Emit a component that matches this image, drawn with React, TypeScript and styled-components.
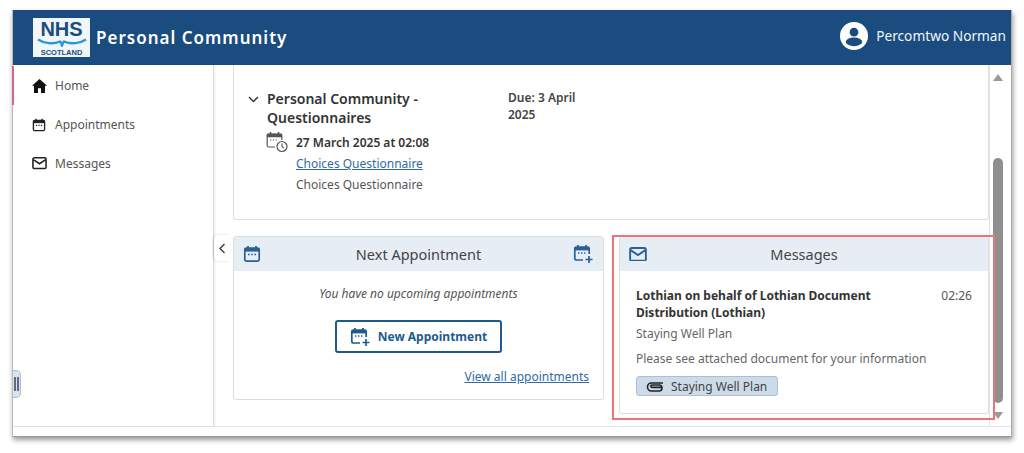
import React, { FC } from 'react';
import styled, { createGlobalStyle } from 'styled-components';

const GlobalStyle = createGlobalStyle`
  html, body { margin: 0; padding: 0; background: #fff; }
  body { font-family: "Noto Sans", "Open Sans", sans-serif; color: #333; }
`;

const CalendarIcon: FC<{ size?: number }> = ({ size = 18 }) => (
  <svg width={size} height={size} viewBox="0 0 18 18" fill="none">
    <path d="M5 1v3M13 1v3" stroke="currentColor" strokeWidth="1.8" />
    <rect x="1.8" y="3" width="14.4" height="13.2" rx="1.6" stroke="currentColor" strokeWidth="1.7" />
    <rect x="1.8" y="3" width="14.4" height="3.6" fill="currentColor" />
    <path d="M5 9.5h1.6M8.2 9.5h1.6M11.4 9.5h1.6" stroke="currentColor" strokeWidth="1.4" />
  </svg>
);

const CalendarPlusIcon: FC = () => (
  <svg width="21" height="20" viewBox="0 0 21 20" fill="none">
    <path d="M5 1v3M13 1v3" stroke="currentColor" strokeWidth="1.8" />
    <path d="M10 16H3.4a1.6 1.6 0 0 1-1.6-1.6V4.6A1.6 1.6 0 0 1 3.4 3h11.2a1.6 1.6 0 0 1 1.6 1.6V10" stroke="currentColor" strokeWidth="1.7" />
    <rect x="1.8" y="3" width="14.4" height="3.4" fill="currentColor" />
    <path d="M5 9h1.4M8 9h1.4M11 9h1.4" stroke="currentColor" strokeWidth="1.3" />
    <path d="M16 12v7M12.5 15.5h7" stroke="currentColor" strokeWidth="1.7" />
  </svg>
);

const CalendarClockIcon: FC = () => (
  <svg width="22" height="22" viewBox="0 0 22 22" fill="none" stroke="#555">
    <path d="M4.5 1v3M12.5 1v3" strokeWidth="1.5" />
    <path d="M9 16H2.6A1.4 1.4 0 0 1 1.2 14.6V4.4A1.4 1.4 0 0 1 2.6 3h11.8a1.4 1.4 0 0 1 1.4 1.4V9" strokeWidth="1.2" />
    <rect x="1.2" y="3" width="14.6" height="3" fill="#555" strokeWidth="0.5" />
    <path d="M4 9h1.2M6.8 9H8M9.6 9h1.2" strokeWidth="1.1" />
    <circle cx="16" cy="15.5" r="5" strokeWidth="1.2" />
    <path d="M16 12.5v3l2 1.6" strokeWidth="1.1" />
  </svg>
);

const MailIcon: FC<{ size?: number }> = ({ size = 18 }) => (
  <svg width={size} height={size * 0.82} viewBox="0 0 18 15" fill="none" stroke="currentColor" strokeWidth="1.9">
    <rect x="1" y="1" width="16" height="13" rx="1.6" />
    <path d="M1.4 3.2 9 8.2l7.600-5" />
  </svg>
);

export default function App() {
  return (
    <Page>
      <GlobalStyle />
      <Window>
        <Header>
          <Logo>
            <LogoWord>NHS</LogoWord>
            <svg width="50" height="9" viewBox="0 0 50 9" fill="none">
              <path d="M1 1.500c6 4 15 5 22 2 1 0 1.500 3 2 4 .5-1 1-4 2-4 7 3 16 2 22-2" stroke="#2a9ad6" strokeWidth="2.400" />
            </svg>
            <LogoSub>SCOTLAND</LogoSub>
          </Logo>
          <AppTitle>Personal Community</AppTitle>
          <User>
            <svg width="28" height="28" viewBox="0 0 29 29">
              <circle cx="14.500" cy="14.500" r="14.500" fill="#fff" />
              <circle cx="14.500" cy="10.500" r="4.500" fill="#1a4c80" />
              <ellipse cx="14.500" cy="20.500" rx="8.500" ry="4.500" fill="#1a4c80" />
            </svg>
            <UserName>Percomtwo Norman</UserName>
          </User>
        </Header>
        <Body>
          <Sidebar>
            <NavItem $active>
              <NavIcon>
                <svg width="15" height="14" viewBox="0 0 15 14" fill="#111">
                  <path d="M7.500 0 15 6.800h-2V14H9V9.200H6V14H2V6.800H0z" />
                </svg>
              </NavIcon>
              Home
            </NavItem>
            <NavItem>
              <NavIcon><CalendarIcon size={14} /></NavIcon>
              Appointments
            </NavItem>
            <NavItem>
              <NavIcon><MailIcon size={15} /></NavIcon>
              Messages
            </NavItem>
            <ResizeHandle>
              <i /><i />
            </ResizeHandle>
          </Sidebar>
          <Main>
            <CollapseTab>
              <svg width="8" height="11" viewBox="0 0 8 11" fill="none" stroke="#444" strokeWidth="1.500">
                <path d="M6.500 1 2 5.500l4.500 4.500" />
              </svg>
            </CollapseTab>
            <Content>
              <TopCard>
                <Chevron>
                  <svg width="11" height="7" viewBox="0 0 11 7" fill="none" stroke="#333" strokeWidth="1.400">
                    <path d="M1 1l4.500 4.500L10 1" />
                  </svg>
                </Chevron>
                <TopMain>
                  <TopTitle>Personal Community - Questionnaires</TopTitle>
                  <DateRow>
                    <CalendarClockIcon />
                    <DateText>27 March 2025 at 02:08</DateText>
                  </DateRow>
                  <Detail>
                    <TextLink>Choices Questionnaire</TextLink>
                    <DetailText>Choices Questionnaire</DetailText>
                  </Detail>
                </TopMain>
                <Due>Due: 3 April 2025</Due>
              </TopCard>
              <Columns>
                <Card>
                  <CardHeader>
                    <HeaderIcon><CalendarIcon /></HeaderIcon>
                    <CardTitle>Next Appointment</CardTitle>
                    <HeaderIcon><CalendarPlusIcon /></HeaderIcon>
                  </CardHeader>
                  <AppointmentBody>
                    <EmptyNote>You have no upcoming appointments</EmptyNote>
                    <NewButton>
                      <CalendarPlusIcon />
                      New Appointment
                    </NewButton>
                    <ViewAll>View all appointments</ViewAll>
                  </AppointmentBody>
                </Card>
                <HighlightWrap>
                  <Card>
                    <CardHeader>
                      <HeaderIcon><MailIcon /></HeaderIcon>
                      <CardTitle>Messages</CardTitle>
                      <HeaderSpacer />
                    </CardHeader>
                    <MessageBody>
                      <SenderRow>
                        <Sender>Lothian on behalf of Lothian Document Distribution (Lothian)</Sender>
                        <Time>02:26</Time>
                      </SenderRow>
                      <Subject>Staying Well Plan</Subject>
                      <Preview>Please see attached document for your information</Preview>
                      <Attachment>
                        <svg width="18" height="11" viewBox="0 0 18 11" fill="none" stroke="#222" strokeWidth="1.600">
                          <path d="M17 2H5.500a4 4 0 0 0 0 8H13a3 3 0 0 0 0-6H6a1.200 1.200 0 0 0 0 2.400h10" />
                        </svg>
                        Staying Well Plan
                      </Attachment>
                    </MessageBody>
                  </Card>
                  <Highlight />
                </HighlightWrap>
              </Columns>
            </Content>
            <Scrollbar>
              <ArrowUp />
              <Thumb />
              <ArrowDown />
            </Scrollbar>
          </Main>
        </Body>
        <FootStrip />
      </Window>
    </Page>
  );
}

const Page = styled.div`
  width: 1024px;
  height: 453px;
  overflow: hidden;
  padding: 10px 12px 0;
  box-sizing: border-box;
  background: #fff;
`;

const Window = styled.div`
  width: 1000px;
  height: 427px;
  display: flex;
  flex-direction: column;
  background: #fff;
  border-right: 1px solid #aaa;
  border-left: 1px solid #bbb;
  border-bottom: 1px solid #999;
  box-sizing: border-box;
  box-shadow: 1px 3px 5px rgba(0, 0, 0, 0.4);
`;

const Header = styled.header`
  flex: none;
  height: 55px;
  display: flex;
  align-items: center;
  padding: 0 5px 0 20px;
  background: #1a4c80;
  color: #fff;
`;

const Logo = styled.div`
  width: 57px;
  height: 39px;
  margin-top: -1px;
  display: flex;
  flex-direction: column;
  align-items: center;
  background: #f1f6fa;
  color: #1a4c80;
  overflow: hidden;
`;

const LogoWord = styled.div`
  font-family: "Liberation Sans", sans-serif;
  font-weight: 700;
  font-size: 20px;
  line-height: 18px;
  margin-top: 2px;
`;

const LogoSub = styled.div`
  font-family: "Liberation Sans", sans-serif;
  font-weight: 700;
  font-size: 7.500px;
  line-height: 9px;
  margin-top: 1px;
`;

const AppTitle = styled.div`
  margin-left: 6px;
  font-size: 17px;
  font-weight: 600;
  letter-spacing: 1px;
  color: #fff;
`;

const User = styled.div`
  margin-left: auto;
  display: flex;
  align-items: center;
  gap: 8px;
  margin-top: -4px;
`;

const UserName = styled.div`
  font-size: 13.700px;
  color: #f2f5f9;
`;

const Body = styled.div`
  flex: 1;
  min-height: 0;
  display: flex;
`;

const Sidebar = styled.nav`
  position: relative;
  flex: none;
  width: 201px;
  padding-top: 1px;
  box-sizing: border-box;
  border-right: 1px solid #ddd;
  box-shadow: 1px 0 2px rgba(0, 0, 0, 0.08);
`;

const NavItem = styled.div<{ $active?: boolean }>`
  height: 39px;
  display: flex;
  align-items: center;
  padding-left: 18px;
  font-size: 12px;
  color: #555;
  border-left: 2px solid ${(p) => (p.$active ? '#d9648f' : 'transparent')};
  margin-left: -1px;
`;

const NavIcon = styled.span`
  width: 23px;
  display: flex;
  align-items: center;
  color: #222;
`;

const ResizeHandle = styled.div`
  position: absolute;
  left: 0;
  top: 305px;
  width: 8px;
  height: 28px;
  box-sizing: border-box;
  padding: 6px 1px;
  display: flex;
  gap: 1px;
  justify-content: center;
  background: #dbe3ec;
  border: 1px solid #aebccb;
  border-left: none;
  border-radius: 0 5px 5px 0;

  i {
    width: 2px;
    background: #5b6c80;
  }
`;

const Main = styled.main`
  position: relative;
  flex: 1;
  min-width: 0;
  display: flex;
`;

const CollapseTab = styled.div`
  position: absolute;
  left: 0;
  top: 170px;
  width: 16px;
  height: 26px;
  display: flex;
  align-items: center;
  justify-content: center;
  background: #fff;
  border-radius: 4px 0 0 4px;
  box-shadow: -1px 0 2px rgba(0, 0, 0, 0.18);
`;

const Content = styled.div`
  flex: 1;
  min-width: 0;
  padding: 0 0 0 19px;
`;

const TopCard = styled.section`
  height: 155px;
  box-sizing: border-box;
  padding: 24px 0 0 14px;
  display: flex;
  align-items: flex-start;
  border: 1px solid #ddd;
  border-top: none;
  border-radius: 0 0 3px 3px;
`;

const Chevron = styled.span`
  width: 19px;
  flex: none;
  line-height: 18px;
  margin-top: -1px;
`;

const TopMain = styled.div`
  width: 170px;
  flex: none;
`;

const TopTitle = styled.div`
  font-size: 14px;
  font-weight: 600;
  line-height: 19px;
  color: #333;
`;

const DateRow = styled.div`
  display: flex;
  align-items: center;
  gap: 8px;
  margin-top: 4px;
  margin-left: -1px;
  white-space: nowrap;
`;

const DateText = styled.span`
  font-size: 12px;
  font-weight: 600;
  color: #333;
`;

const Detail = styled.div`
  margin: 1px 0 0 29px;
  white-space: nowrap;
`;

const TextLink = styled.div`
  font-size: 12px;
  line-height: 20px;
  color: #2f6aa3;
  text-decoration: underline;
`;

const DetailText = styled.div`
  font-size: 12px;
  line-height: 20px;
  margin-top: 1px;
  color: #555;
`;

const Due = styled.div`
  width: 82px;
  margin-left: 71px;
  font-size: 12px;
  font-weight: 600;
  line-height: 17px;
  color: #444;
`;

const Columns = styled.div`
  display: grid;
  grid-template-columns: 371px 1fr;
  align-items: start;
  gap: 15px;
  margin-top: 16px;
`;

const Card = styled.section`
  flex: 1;
  min-width: 0;
  border: 1px solid #ddd;
  border-radius: 3px;
  box-sizing: border-box;
`;

const HighlightWrap = styled.div`
  position: relative;
  min-width: 0;
  display: flex;
`;

const Highlight = styled.div`
  position: absolute;
  z-index: 2;
  left: -7px;
  right: -6px;
  top: -1px;
  height: 185px;
  box-sizing: border-box;
  border: 2px solid #ec7478;
  pointer-events: none;
`;

const CardHeader = styled.div`
  height: 34px;
  display: flex;
  align-items: center;
  justify-content: space-between;
  padding: 0 9px;
  background: #e7edf4;
`;

const HeaderIcon = styled.span`
  display: flex;
  width: 21px;
  color: #2a6096;
`;

const HeaderSpacer = styled.span`
  width: 21px;
`;

const CardTitle = styled.div`
  font-size: 14.500px;
  color: #444;
`;

const AppointmentBody = styled.div`
  height: 128px;
  box-sizing: border-box;
  padding-top: 14px;
  display: flex;
  flex-direction: column;
  align-items: center;
`;

const EmptyNote = styled.div`
  font-size: 12px;
  font-style: italic;
  line-height: 18px;
  color: #555;
`;

const NewButton = styled.button`
  margin-top: 17px;
  width: 167px;
  height: 33px;
  display: flex;
  align-items: center;
  justify-content: center;
  gap: 7px;
  background: #fff;
  border: 2px solid #1f5a8f;
  border-radius: 3px;
  color: #1f5a8f;
  font-family: inherit;
  font-size: 12px;
  font-weight: 700;
`;

const ViewAll = styled.div`
  align-self: flex-end;
  margin: 15px 14px 0 0;
  font-size: 12px;
  color: #2f6aa3;
  text-decoration: underline;
`;

const MessageBody = styled.div`
  height: 142px;
  box-sizing: border-box;
  padding: 16px 16px 0 16px;
`;

const SenderRow = styled.div`
  display: flex;
  justify-content: space-between;
  align-items: flex-start;
`;

const Sender = styled.div`
  width: 280px;
  font-size: 12px;
  font-weight: 700;
  line-height: 17px;
  color: #333;
`;

const Time = styled.div`
  font-size: 12px;
  line-height: 17px;
  color: #555;
`;

const Subject = styled.div`
  margin-top: 4px;
  font-size: 12px;
  line-height: 18px;
  color: #666;
`;

const Preview = styled.div`
  margin-top: 7px;
  font-size: 12px;
  line-height: 18px;
  color: #666;
  white-space: nowrap;
`;

const Attachment = styled.div`
  margin-top: 8px;
  width: 142px;
  height: 20px;
  box-sizing: border-box;
  display: flex;
  align-items: center;
  gap: 7px;
  padding-left: 9px;
  background: #cddbe9;
  border: 1px solid #a9c0d6;
  border-radius: 3px;
  font-size: 12px;
  color: #444;
  white-space: nowrap;
`;

const Scrollbar = styled.div`
  flex: none;
  width: 17px;
  margin-right: 5px;
  border-left: 1px solid #e4e4e4;
  display: flex;
  flex-direction: column;
  align-items: center;
  box-sizing: border-box;
  height: 362px;
`;

const ArrowUp = styled.div`
  margin-top: 9px;
  border-left: 5px solid transparent;
  border-right: 5px solid transparent;
  border-bottom: 7px solid #999;
`;

const Thumb = styled.div`
  margin-top: 77px;
  width: 10px;
  height: 245px;
  background: #8f8f8f;
  border-radius: 5px;
`;

const ArrowDown = styled.div`
  margin-top: 9px;
  border-left: 5px solid transparent;
  border-right: 5px solid transparent;
  border-top: 7px solid #999;
`;

const FootStrip = styled.div`
  flex: none;
  height: 9px;
  border-top: 1px solid #e4e4e4;
`;
